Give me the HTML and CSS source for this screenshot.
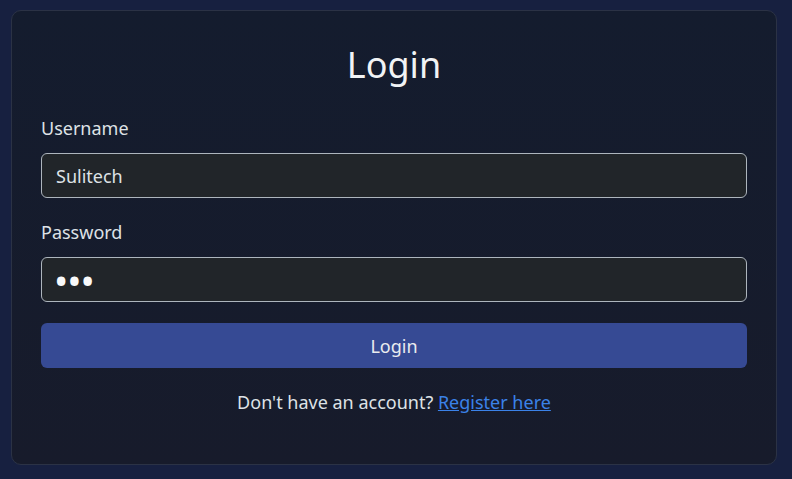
FILE: index.html
```html
<!DOCTYPE html>
<html lang="en">
<head>
    <meta charset="UTF-8">
    <title>Login</title>
    <link rel="stylesheet" href="styles.css">
</head>
<body>
    <div class="container">
        <h1>Login</h1>
        <form id="loginForm">
            <div class="form-group">
                <label for="username">Username</label>
                <input type="text" id="username" name="username" value="Sulitech">
            </div>
            <div class="form-group">
                <label for="password">Password</label>
                <input type="password" id="password" name="password" value="abc">
            </div>
            <button type="submit">Login</button>
            <div class="register-link">
                <p>Don't have an account? <a href="#">Register here</a></p>
            </div>
        </form>
    </div>
</body>
</html>
```

FILE: styles.css
```css
* { padding: 0; margin: 0; box-sizing: border-box; }
body {
    background: #172040;
    font-family: "Noto Sans", sans-serif;
    color: #dee2e6;
    padding: 10px 15px 14px 11px;
    height: 100vh;
}
.container {
    background: linear-gradient(#141c2e, #171b2b);
    border: 1px solid #2b3245;
    border-radius: 10px;
    width: 766px;
    height: 455px;
    padding: 32px 29px;
}
.container h1 {
    text-align: center;
    font-size: 36px;
    font-weight: 400;
    line-height: 43px;
    color: #f1f3f5;
    margin-bottom: 29px;
}
.form-group {
    margin-bottom: 21px;
}
.form-group label {
    display: block;
    font-size: 18px;
    line-height: 27px;
    margin-bottom: 11px;
}
.form-group input {
    display: block;
    width: 100%;
    height: 45px;
    padding: 0 14px;
    background: #212529;
    border: 1px solid #adb5bd;
    border-radius: 6px;
    color: #dee2e6;
    font-family: inherit;
    font-size: 18px;
    outline: none;
}
.form-group input[type="password"] {
    font-size: 38px;
    letter-spacing: -1px;
    padding-left: 12px;
    color: #f8f9fa;
}
button {
    display: block;
    width: 100%;
    height: 45px;
    margin-top: 20px;
    background-color: #364a94;
    border: none;
    border-radius: 6px;
    color: #e9ecef;
    font-family: inherit;
    font-size: 18px;
    cursor: pointer;
}
.register-link {
    text-align: center;
    margin-top: 21px;
    font-size: 18px;
    line-height: 27px;
}
.register-link a {
    color: #3b82e8;
}
```
